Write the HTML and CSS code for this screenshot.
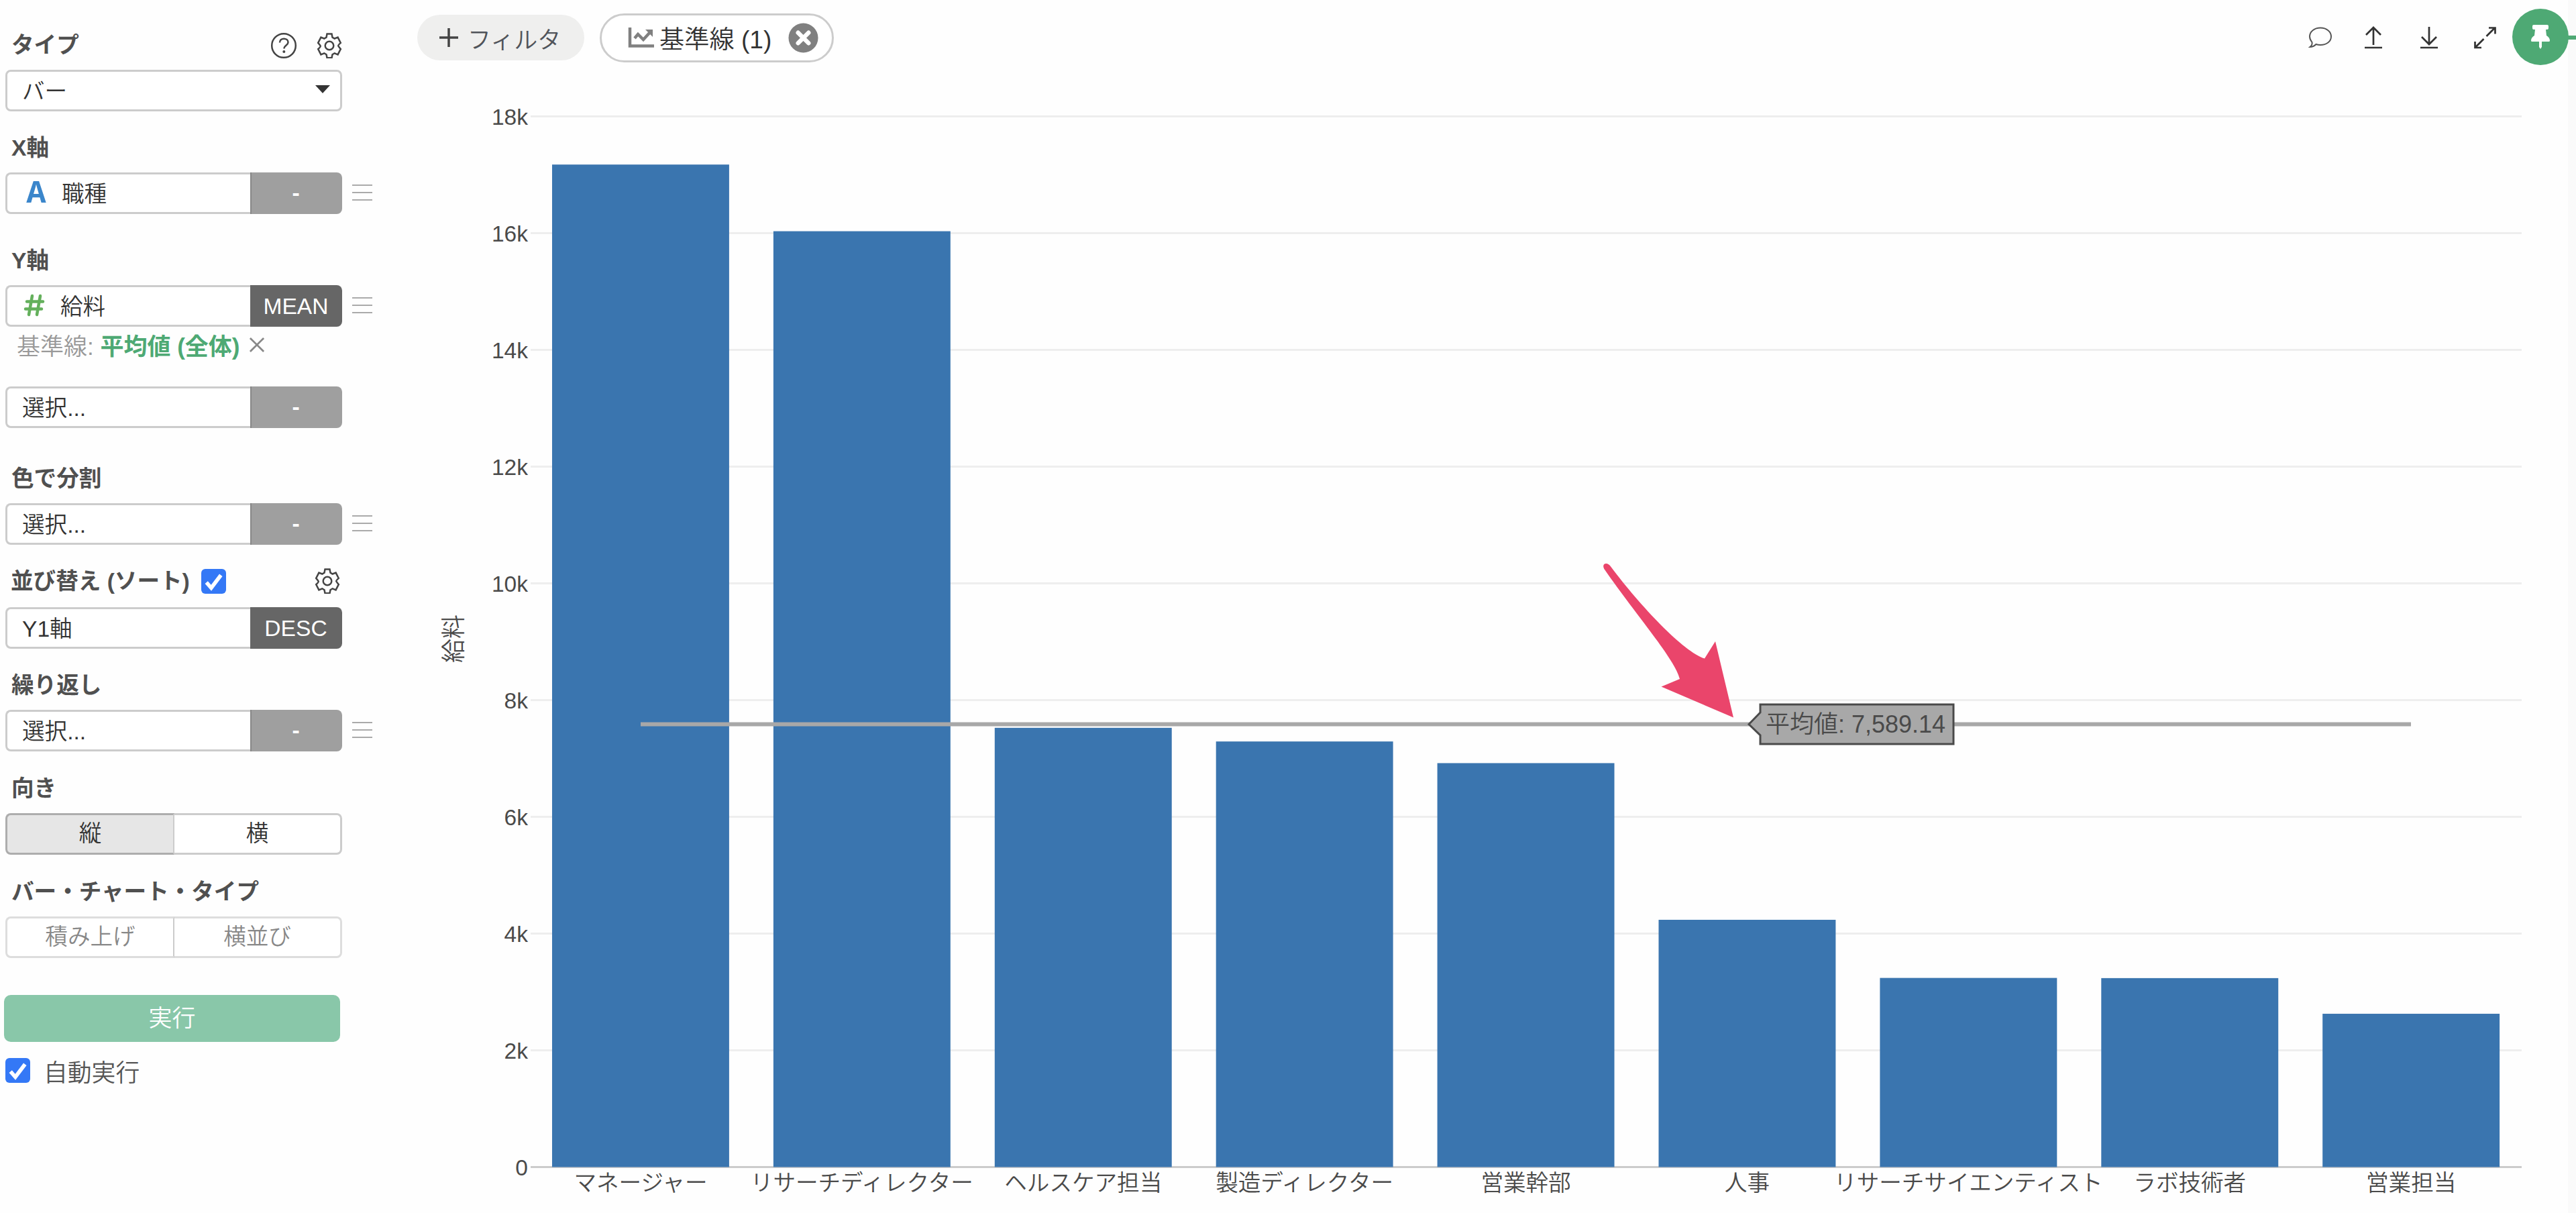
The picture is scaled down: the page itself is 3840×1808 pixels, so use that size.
FILE: index.html
```html
<!DOCTYPE html>
<html lang="ja">
<head>
    <meta charset="UTF-8">
    <meta name="viewport" content="width=device-width, initial-scale=1.0">
    <title>バーチャート</title>
    <link rel="stylesheet" href="styles.css">
</head>
<body>
    <!-- 共通アイコン -->
    <svg class="symbols">
        <symbol id="gear" viewBox="0 0 38 38">
            <path d="M15.5 1.5h7l1 5.2 3.2 1.8 4.9-1.900 4.200 8.300q-4 3.500-3.500 4.600t3.500 4.600l-4.200 8.200-4.900-2-3.200 1.900-1 5.100h-7l-1-5.100-3.200-1.900-4.900 2-4.200-8.200q4-3.500 3.500-4.600t-3.500-4.600l4.200-8.300 4.900 1.900 3.200-1.800z"/>
            <circle cx="19" cy="19" r="6.3"/>
        </symbol>
        <symbol id="check" viewBox="0 0 36 36">
            <path d="M7.5 19.5l7 8L28.5 9"/>
        </symbol>
    </svg>

    <aside class="sidebar">
        <div class="group">
            <div class="label">
                <span>タイプ</span>
                <span class="tools">
                    <svg class="icon" viewBox="0 0 38 38"><circle cx="19" cy="19" r="17.8"/><path d="M13 14.5c0-8 12.500-7.500 12.500-.5 0 4.500-6 4.500-6 9.500"/><circle class="dot" cx="19.300" cy="28" r="2"/></svg>
                    <svg class="icon"><use href="#gear"/></svg>
                </span>
            </div>
            <div class="select">バー<i class="caret"></i></div>
        </div>

        <div class="group">
            <div class="label">X軸</div>
            <div class="row">
                <div class="field"><span class="type-text">A</span>職種</div>
                <div class="func">-</div>
                <div class="menu"></div>
            </div>
        </div>

        <div class="group y-axis">
            <div class="label">Y軸</div>
            <div class="row">
                <div class="field"><svg class="type-num" viewBox="0 0 30 30"><path d="M12 1L7 29M24 1l-5 28M4 9.500h24M2 20.500h24"/></svg>給料</div>
                <div class="func dark">MEAN</div>
                <div class="menu"></div>
            </div>
            <div class="refline">基準線: <b>平均値 (全体)</b><svg viewBox="0 0 24 24"><path d="M1 1l22 22M23 1L1 23"/></svg></div>
            <div class="row second">
                <div class="field">選択...</div>
                <div class="func">-</div>
            </div>
        </div>

        <div class="group color">
            <div class="label">色で分割</div>
            <div class="row">
                <div class="field">選択...</div>
                <div class="func">-</div>
                <div class="menu"></div>
            </div>
        </div>

        <div class="group sort">
            <div class="label">
                <span>並び替え (ソート)</span>
                <span class="checkbox"><svg><use href="#check"/></svg></span>
                <span class="tools"><svg class="icon"><use href="#gear"/></svg></span>
            </div>
            <div class="row">
                <div class="field">Y1軸</div>
                <div class="func dark">DESC</div>
            </div>
        </div>

        <div class="group">
            <div class="label">繰り返し</div>
            <div class="row">
                <div class="field">選択...</div>
                <div class="func">-</div>
                <div class="menu"></div>
            </div>
        </div>

        <div class="group">
            <div class="label">向き</div>
            <div class="buttons">
                <div class="button active">縦</div>
                <div class="button">横</div>
            </div>
        </div>

        <div class="group">
            <div class="label">バー・チャート・タイプ</div>
            <div class="buttons disabled">
                <div class="button">積み上げ</div>
                <div class="button">横並び</div>
            </div>
        </div>

        <div class="run">実行</div>
        <div class="auto"><span class="checkbox"><svg><use href="#check"/></svg></span>自動実行</div>
    </aside>

    <main class="main">
        <header class="toolbar">
            <div class="filter"><svg viewBox="0 0 28 28"><path d="M14 0v28M0 14h28"/></svg>フィルタ</div>
            <div class="chip">
                <svg class="chip-chart" viewBox="0 0 38 30"><path d="M2 0v27.500h36M9 16l5-6 8 8L33 6"/><path class="head" d="M25 3h11v11z"/></svg>
                基準線 (1)
                <svg class="chip-close" viewBox="0 0 46 46"><circle cx="23" cy="23" r="22.500"/><path d="M15 15l16 16M31 15L15 31"/></svg>
            </div>
            <div class="actions">
                <svg class="comment" viewBox="0 0 34 32"><path d="M17 1.500c9 0 16 5.500 16 13s-7 12.500-16 12.500c-2.500 0-4.500-.3-6.500-1-2.500 2.500-5.500 4-9 4 2.500-2 3.500-4.500 3-7C2.500 20.500 1 18 1 14.500c0-7.500 7-13 16-13z"/></svg>
                <svg viewBox="0 0 34 32"><path d="M17 1v26M6 12L17 1l11 11M4 31h26"/></svg>
                <svg viewBox="0 0 34 32"><path d="M17 0v26M6 15l11 11 11-11M4 31h26"/></svg>
                <svg viewBox="0 0 34 32"><path d="M19.500 14L32 1.500M23 1.500h9.500v9M15.500 18L3 30.500M2.500 22v9H12"/></svg>
            </div>
        </header>

        <svg class="chart" viewBox="600 112 3228 1696">
            <g class="grid" id="grid"></g>
            <g class="ticks" id="ticks"></g>
            <line class="zero" x1="791" y1="1739.5" x2="3759" y2="1739.5"/>
            <g class="bars" id="bars"></g>
            <g class="categories" id="categories"></g>
            <text class="y-title" transform="translate(676 952) rotate(-90)" dy="13">給料</text>
            <line class="mean" x1="955" y1="1079.5" x2="3594" y2="1079.5"/>
            <path class="hover-box" d="M2607 1079.500L2624 1062V1050H2912V1109H2624V1096Z"/>
            <text class="hover-text" x="2632" y="1092">平均値: 7,589.14</text>
            <path class="arrow" d="M2392 849C2386 840 2396 836 2401.500 845C2445 903 2510 972 2541 981.500L2557 956L2584 1069.500L2476.500 1023.500L2504 1012C2498 984 2440 918 2392 849Z"/>
        </svg>
    </main>

    <div class="edge"></div>
    <div class="pin">
        <svg viewBox="0 0 28 36"><path d="M4 0h20q2 0 2 2v3q0 2-2 2h-2l1 9c3 1.500 5 4.500 5 7.500q0 1.500-1.500 1.500H16v8l-2 3-2-3v-8H1.500Q0 25 0 23.500C0 20.500 2 17.500 5 16l1-9H4Q2 7 2 5V2q0-2 2-2z"/></svg>
    </div>

    <script src="chart.js"></script>
</body>
</html>
```
FILE: styles.css
```css
* {
    box-sizing: border-box;
}
body {
    margin: 0;
    width: 3840px;
    height: 1808px;
    overflow: hidden;
    display: flex;
    position: relative;
    background-color: #fefefe;
    color: #333;
    font-family: "Liberation Sans", "Noto Sans CJK JP", sans-serif;
    font-size: 33.6px;
    font-weight: 350;
}
svg {
    fill: none;
    stroke: #444;
    stroke-width: 2.5;
    flex: none;
    overflow: visible;
}
.symbols {
    position: absolute;
    width: 0;
    height: 0;
}

/* sidebar */
.sidebar {
    width: 600px;
    padding: 46px 0 0 8px;
}
.group {
    margin-bottom: 34px;
}
.group:first-child {
    margin-bottom: 33px;
}
.group:nth-child(2) {
    margin-bottom: 48px;
}
.group.y-axis {
    margin-bottom: 54px;
}
.group.color {
    margin-bottom: 35px;
}
.group.sort {
    margin-bottom: 33px;
}
.label {
    display: flex;
    align-items: center;
    width: 502px;
    height: 40px;
    margin-bottom: 18px;
    padding: 4px 0 0 9px;
    color: #505050;
    font-weight: bold;
    line-height: 40px;
    white-space: nowrap;
}
.sort .label {
    padding: 0 0 1px 8px;
}
.tools {
    display: flex;
    gap: 30px;
    margin-left: auto;
}
.sort .tools {
    padding: 0 3px 2px 0;
}
.icon {
    width: 38px;
    height: 38px;
}
.icon .dot {
    fill: #444;
    stroke: none;
}
.checkbox {
    display: flex;
    width: 37px;
    height: 37px;
    border-radius: 6px;
    background-color: #3478f6;
}
.checkbox svg {
    width: 37px;
    height: 37px;
    stroke: #fff;
    stroke-width: 5.5;
}
.sort .checkbox {
    margin-left: 17px;
}
.select {
    display: flex;
    align-items: center;
    justify-content: space-between;
    width: 502px;
    height: 62px;
    padding: 0 15px 4px 22px;
    border: 3px solid #ccc;
    border-radius: 8px;
    background-color: #fff;
}
.caret {
    border: 11px solid transparent;
    border-top: 12px solid #333;
    border-bottom: 0;
}
.row {
    display: flex;
    align-items: center;
    height: 62px;
}
.field {
    display: flex;
    align-items: center;
    width: 365px;
    height: 62px;
    padding: 0 0 3px 22px;
    border: 3px solid #ccc;
    border-right: 0;
    border-radius: 8px 0 0 8px;
    background-color: #fff;
}
.type-text {
    width: 32px;
    margin: 4px 22px 0 5px;
    color: #3b86cb;
    font-family: "Liberation Mono", monospace;
    font-size: 49px;
    font-weight: bold;
    line-height: 50px;
    text-align: center;
}
.type-num {
    width: 30px;
    height: 34px;
    margin: 0 24px 0 3px;
    stroke: #64b05c;
    stroke-width: 4.5;
    stroke-linecap: round;
}
.func {
    width: 137px;
    height: 62px;
    padding-right: 3px;
    border-left: 2px solid #888;
    border-radius: 0 8px 8px 0;
    background-color: #9f9f9f;
    color: #fff;
    font-weight: bold;
    line-height: 61px;
    text-align: center;
}
.func.dark {
    border-color: #666;
    background-color: #666;
    font-weight: normal;
    line-height: 63px;
}
.menu {
    width: 30px;
    height: 24px;
    margin: 0 0 2px 15px;
    border-top: 2.500px solid #aaa;
    border-bottom: 2.500px solid #aaa;
    background: linear-gradient(#aaa, #aaa) center / 100% 2px no-repeat;
}
.refline {
    display: flex;
    align-items: center;
    height: 56px;
    margin-bottom: 33px;
    padding: 0 0 4px 17px;
    color: #999;
    font-size: 35px;
    white-space: pre;
}
.refline b {
    color: #4ea974;
    font-weight: 700;
}
.refline svg {
    width: 22px;
    height: 22px;
    margin: 2px 0 0 14px;
    stroke: #888;
    stroke-width: 3;
}
.buttons {
    display: flex;
    width: 502px;
    height: 62px;
}
.button {
    flex: 1;
    border: 3px solid #ccc;
    border-left-width: 0;
    border-radius: 0 8px 8px 0;
    background-color: #fff;
    line-height: 56px;
    text-align: center;
}
.button:first-child {
    border-width: 3px 2px 3px 3px;
    border-radius: 8px 0 0 8px;
}
.button.active {
    border-color: #adadad #ccc #adadad #adadad;
    background-color: #e6e6e6;
}
.disabled .button {
    border-color: #ddd;
    color: #888;
}
.disabled .button:first-child {
    border-right-color: #ccc;
}
.run {
    width: 501px;
    height: 70px;
    margin: 55px 0 20px -2px;
    border-radius: 10px;
    background-color: #89c7a9;
    color: #fff;
    font-size: 35px;
    line-height: 69px;
    text-align: center;
}
.auto {
    display: flex;
    align-items: center;
    gap: 20px;
    height: 45px;
    color: #555;
    font-size: 35.8px;
}

/* toolbar */
.main {
    width: 3228px;
}
.toolbar {
    display: flex;
    align-items: center;
    height: 112px;
    padding: 0 107px 0 22px;
}
.filter {
    display: flex;
    align-items: center;
    width: 249px;
    height: 68px;
    padding-left: 33px;
    border-radius: 34px;
    background-color: #efefee;
    color: #50545a;
    font-size: 35px;
    white-space: nowrap;
}
.filter svg {
    width: 28px;
    height: 28px;
    margin-right: 14px;
    stroke-width: 3.5;
}
.chip {
    display: flex;
    align-items: center;
    width: 349px;
    height: 73px;
    margin-left: 23px;
    padding-left: 40px;
    border: 3px solid #ccc;
    border-radius: 37px;
    background-color: #fff;
    font-size: 37.2px;
    white-space: nowrap;
}
.chip-chart {
    width: 38px;
    height: 30px;
    margin-right: 8px;
    stroke: #808080;
    stroke-width: 4.5;
}
.chip-chart .head {
    fill: #808080;
    stroke: none;
}
.chip-close {
    width: 45px;
    height: 45px;
    margin-left: auto;
    margin-right: 20px;
}
.chip-close circle {
    fill: #808080;
    stroke: none;
}
.chip-close path {
    stroke: #fff;
    stroke-width: 6.5;
    stroke-linecap: round;
}
.actions {
    display: flex;
    margin-left: auto;
    gap: 49px;
}
.actions svg {
    width: 34px;
    height: 32px;
    stroke: #333;
    stroke-width: 2.7;
}
.actions .comment {
    margin-right: -4px;
    stroke: #555;
    stroke-width: 2;
}

/* chart */
.chart {
    display: block;
    width: 3228px;
    height: 1696px;
    stroke: none;
    fill: #4a4a4a;
}
.grid line {
    stroke: #eee;
    stroke-width: 3;
}
.zero {
    stroke: #ccc;
    stroke-width: 3;
}
.ticks text {
    font-size: 33.5px;
    text-anchor: end;
}
.bars rect {
    fill: #3a75af;
}
.categories text {
    font-size: 33.6px;
    text-anchor: middle;
}
.y-title {
    font-size: 36px;
    text-anchor: middle;
}
.mean {
    stroke: #a8a8a8;
    stroke-width: 6;
}
.hover-box {
    fill: #a8a8a8;
    stroke: #4a4a4a;
    stroke-width: 3;
}
.hover-text {
    font-size: 36px;
}
.arrow {
    fill: #ea456b;
}

/* right edge */
.edge {
    width: 12px;
    padding-top: 53px;
    background-color: #fafafa;
}
.edge::before {
    content: "";
    display: block;
    height: 6px;
    background-color: #4ea974;
}
.pin {
    position: absolute;
    top: 13px;
    left: 3745px;
    display: flex;
    align-items: center;
    justify-content: center;
    width: 84px;
    height: 84px;
    border-radius: 50%;
    background-color: #4ea974;
}
.pin svg {
    width: 28px;
    height: 36px;
    fill: #fff;
    stroke: none;
}
```
FILE: chart.js
```js
const data = [
    ['マネージャー', 17175],
    ['リサーチディレクター', 16033],
    ['ヘルスケア担当', 7525],
    ['製造ディレクター', 7291],
    ['営業幹部', 6920],
    ['人事', 4236],
    ['リサーチサイエンティスト', 3240],
    ['ラボ技術者', 3237],
    ['営業担当', 2626]
];

const left = 790;
const bottom = 1739.5;
const step = 329.9;
const scale = (bottom - 173.5) / 18000;

function add(parent, name, attrs, text) {
    const el = document.createElementNS('http://www.w3.org/2000/svg', name);
    for (const key in attrs) {
        el.setAttribute(key, attrs[key]);
    }
    if (text) {
        el.textContent = text;
    }
    document.getElementById(parent).appendChild(el);
}

for (let v = 0; v <= 18000; v += 2000) {
    const y = bottom - v * scale;
    if (v > 0) {
        add('grid', 'line', { x1: 791, y1: y, x2: 3759, y2: y });
    }
    add('ticks', 'text', { x: 787, y: y + 12.5 }, v === 0 ? '0' : v / 1000 + 'k');
}

data.forEach(([name, value], i) => {
    const x = left + step * i;
    add('bars', 'rect', { x: x + step * 0.1, y: bottom - value * scale, width: step * 0.8, height: value * scale });
    add('categories', 'text', { x: x + step / 2, y: 1775 }, name);
});
```
